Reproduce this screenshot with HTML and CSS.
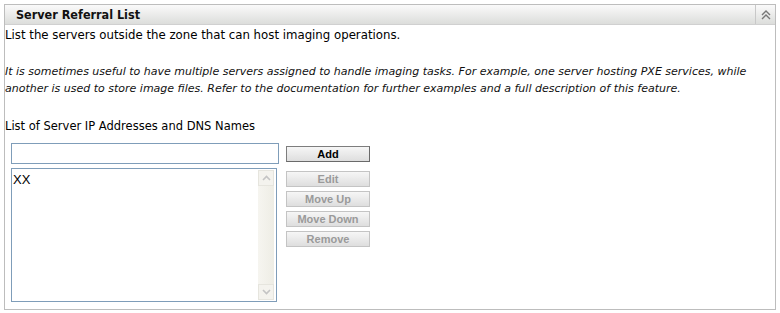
FILE: index.html
```html
<!DOCTYPE html>
<html>
<head>
<meta charset="utf-8">
<link rel="stylesheet" href="styles.css">
</head>
<body>
<div class="panel">
  <div class="panel-head">
    <span class="panel-title">Server Referral List</span>
    <span class="collapse">
      <svg width="12" height="12" viewBox="0 0 12 12"><path d="M2 6 L6 2 L10 6 M2 10 L6 6 L10 10" fill="none" stroke="#777" stroke-width="1.4"/></svg>
    </span>
  </div>
  <div class="panel-body">
    <p class="intro">List the servers outside the zone that can host imaging operations.</p>
    <p class="note">It is sometimes useful to have multiple servers assigned to handle imaging tasks. For example, one server hosting PXE services, while another is used to store image files. Refer to the documentation for further examples and a full description of this feature.</p>
    <p class="label">List of Server IP Addresses and DNS Names</p>
    <div class="editor">
      <div class="left">
        <div class="textbox"></div>
        <div class="listbox">
          <div class="items">XX</div>
          <div class="scroll">
            <span class="sbtn"><svg width="9" height="6" viewBox="0 0 9 6"><path d="M1 5 L4.5 1.5 L8 5" fill="none" stroke="#c4c4c4" stroke-width="1.6"/></svg></span>
            <span class="sbtn"><svg width="9" height="6" viewBox="0 0 9 6"><path d="M1 1 L4.5 4.5 L8 1" fill="none" stroke="#c4c4c4" stroke-width="1.6"/></svg></span>
          </div>
        </div>
      </div>
      <div class="buttons">
        <button class="btn add">Add</button>
        <div class="group">
          <button class="btn dis">Edit</button>
          <button class="btn dis">Move Up</button>
          <button class="btn dis">Move Down</button>
          <button class="btn dis">Remove</button>
        </div>
      </div>
    </div>
  </div>
</div>
</body>
</html>
```
FILE: styles.css
```css
html, body { margin: 0; padding: 0; background: #fff; }
body { padding: 4px 4px 0 4px; font-family: "DejaVu Sans", sans-serif; color: #000; }
.panel {
  border: 1px solid #bdbdbd;
  box-sizing: border-box;
  width: 772px;
  height: 306px;
}
.panel-head {
  height: 19px;
  display: flex;
  align-items: center;
  background: linear-gradient(#fafafa, #dcdddb);
  border-bottom: 1px solid #d0d0d0;
}
.panel-title {
  flex: 1;
  padding-left: 11px;
  font-family: "DejaVu Sans Condensed", "DejaVu Sans", sans-serif;
  font-weight: bold;
  font-size: 12.5px;
  color: #111;
}
.collapse {
  width: 19px;
  height: 19px;
  border-left: 1px solid #c8c8c8;
  display: flex;
  align-items: center;
  justify-content: center;
}
.panel-body { padding: 0; font-size: 11px; }
.intro { margin: 3px 0 0 0; font-size: 11.75px; line-height: 14px; }
.note { margin: 21px 0 0 0; font-style: italic; font-size: 11px; line-height: 17px; color: #111; }
.label { margin: 22px 0 0 0; font-size: 11.5px; line-height: 14px; }
.editor { display: flex; margin: 10px 0 0 6px; gap: 7px; }
.left { display: flex; flex-direction: column; gap: 4px; }
.textbox { width: 268px; height: 21px; border: 1px solid #7f9db9; box-sizing: border-box; }
.listbox {
  width: 266px; height: 134px; border: 1px solid #7f9db9; box-sizing: border-box;
  display: flex; justify-content: space-between;
}
.items { font-family: "Liberation Sans", sans-serif; font-size: 13px; padding: 3px 0 0 1px; }
.scroll {
  width: 16px; margin: 1px 2px 1px 0;
  background: linear-gradient(90deg, #f6f5f0, #eeede5);
  display: flex; flex-direction: column; justify-content: space-between;
}
.sbtn {
  height: 16px; display: flex; align-items: center; justify-content: center;
  border: 1px solid #e6e5de; background: #f4f3ee; box-sizing: border-box;
}
.buttons { display: flex; flex-direction: column; padding-top: 3px; }
.group { display: flex; flex-direction: column; gap: 4px; margin-top: 9px; }
.btn {
  width: 84px; height: 16px; padding: 0; margin: 0;
  font-family: "Liberation Sans", sans-serif; font-weight: bold; font-size: 11px;
  background: linear-gradient(#f6f6f6, #dedede);
  border: 1px solid #8a8a8a; box-sizing: border-box; line-height: 14px;
}
.add { color: #000; border-color: #7d7d7d #6a6a6a #6a6a6a #7d7d7d; }
.dis { color: #9a9a9a; border-color: #c4c4c4; }
```
